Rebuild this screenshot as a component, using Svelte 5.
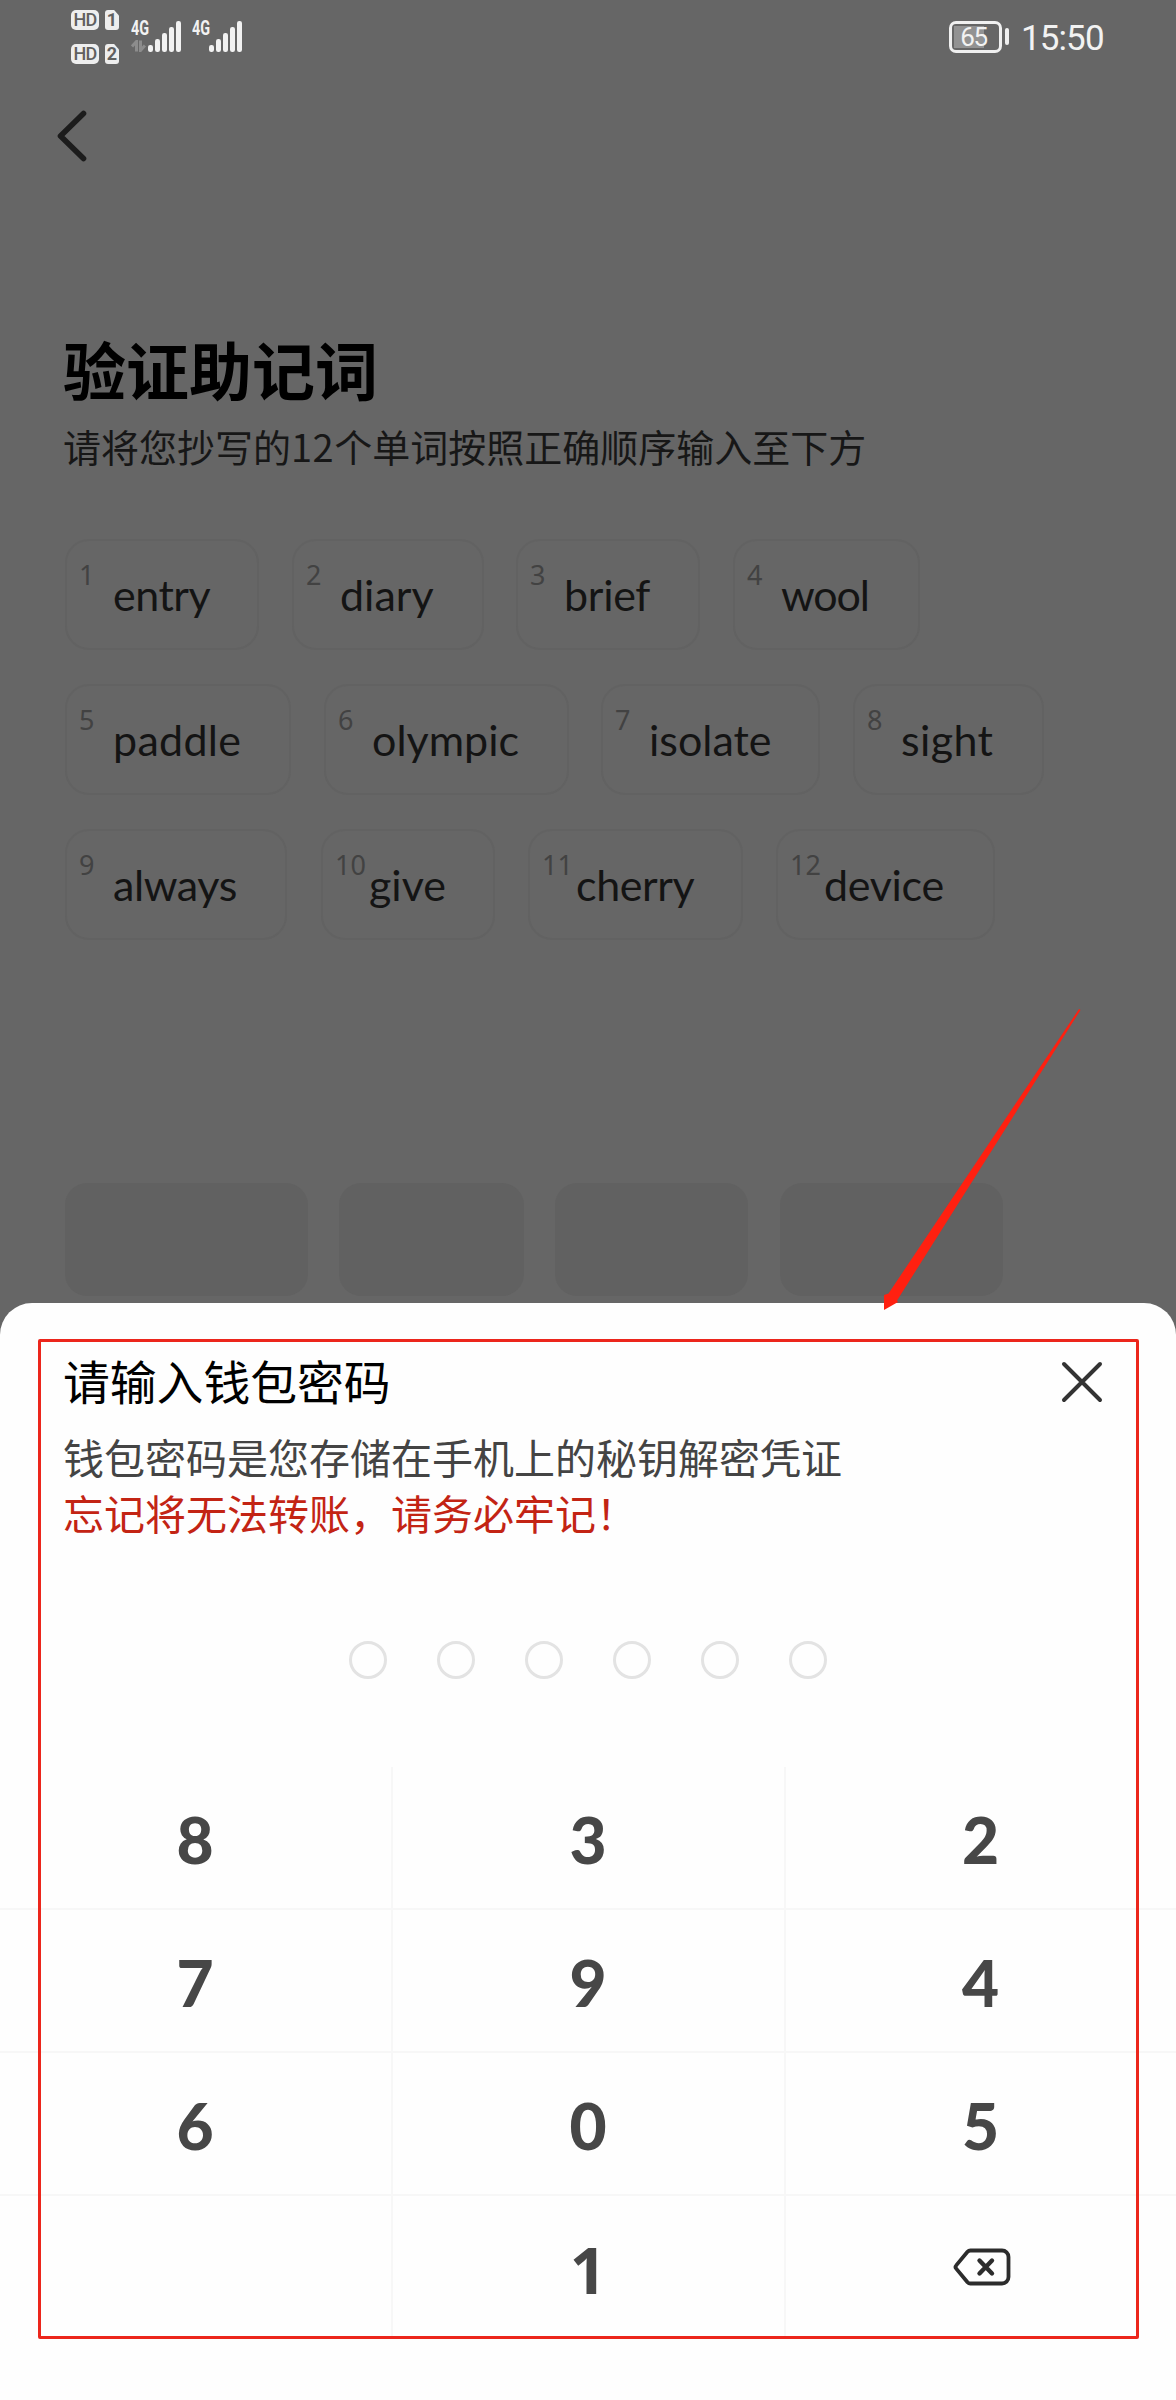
<script>
  const rows = [
    [
      { n: 1, word: 'entry', w: 194, gap: 0, ls: -0.5 },
      { n: 2, word: 'diary', w: 192, gap: 33, ls: 0 },
      { n: 3, word: 'brief', w: 184, gap: 32, ls: -0.3 },
      { n: 4, word: 'wool', w: 187, gap: 33, ls: -1.2 }
    ],
    [
      { n: 5, word: 'paddle', w: 226, gap: 0, ls: 0.3 },
      { n: 6, word: 'olympic', w: 245, gap: 33, ls: 0 },
      { n: 7, word: 'isolate', w: 219, gap: 32, ls: 0 },
      { n: 8, word: 'sight', w: 191, gap: 33, ls: 0.4 }
    ],
    [
      { n: 9, word: 'always', w: 222, gap: 0, ls: -0.4 },
      { n: 10, word: 'give', w: 174, gap: 34, ls: 0 },
      { n: 11, word: 'cherry', w: 215, gap: 33, ls: -0.4 },
      { n: 12, word: 'device', w: 219, gap: 33, ls: -0.3 }
    ]
  ];
  const slots = [
    { w: 243, gap: 0 },
    { w: 185, gap: 31 },
    { w: 193, gap: 31 },
    { w: 223, gap: 32 }
  ];
  const keys = ['8', '3', '2', '7', '9', '4', '6', '0', '5', '', '1', 'del'];
  const bars = [6.5, 12.5, 19, 25, 31];
</script>

<div class="screen">
  <header class="status">
    <div class="sims">
      {#each [1, 2] as n}
        <div class="sim"><span class="hd">HD</span><span class="card">{n}</span></div>
      {/each}
    </div>
    {#each [0, 1] as s}
      <div class="signal">
        <div class="net">
          <span>4G</span>
          {#if s === 0}
            <svg width="15" height="12" viewBox="0 0 15 12" fill="none" stroke="#8c8c8c" stroke-width="3">
              <path d="M5.500 11.500V1.500L1 6.500M9.500 .5v10l4.400-5" />
            </svg>
          {/if}
        </div>
        <div class="bars">
          {#each bars as h}<i style="height:{h}px"></i>{/each}
        </div>
      </div>
    {/each}
    <div class="battery">65</div>
    <i class="cap"></i>
    <div class="clock">15:50</div>
  </header>

  <nav class="nav">
    <svg width="32" height="54" viewBox="0 0 32 54" fill="none" stroke="#1c1c1c" stroke-width="5.6" stroke-linecap="round" stroke-linejoin="round">
      <path d="M27.500 4.500 4.500 27 27.500 49.500" />
    </svg>
  </nav>

  <main class="content">
    <h1>验证助记词</h1>
    <p class="sub">请将您抄写的<span>12</span>个单词按照正确顺序输入至下方</p>

    <div class="words">
      {#each rows as row}
        <div class="row">
          {#each row as c}
            <div class="chip" style="width:{c.w}px;margin-left:{c.gap}px">
              <span class="num">{c.n}</span>
              <span class="word" style="letter-spacing:{c.ls}px">{c.word}</span>
            </div>
          {/each}
        </div>
      {/each}
    </div>

    <div class="row slots">
      {#each slots as s}
        <div class="slot" style="width:{s.w}px;margin-left:{s.gap}px"></div>
      {/each}
    </div>
  </main>

  <section class="sheet">
    <div class="head">
      <h2>请输入钱包密码</h2>
      <svg width="42" height="42" viewBox="0 0 42 42" fill="none" stroke="#333" stroke-width="4" stroke-linecap="round">
        <path d="M3 3 39 39M39 3 3 39" />
      </svg>
    </div>
    <p class="note">钱包密码是您存储在手机上的秘钥解密凭证</p>
    <p class="note warn">忘记将无法转账，请务必牢记！</p>
    <div class="dots">
      {#each Array(6) as _}<i></i>{/each}
    </div>
    <div class="pad">
      {#each keys as k}
        <div class="key" class:one={k === '1'}>
          {#if k === 'del'}
            <svg width="58" height="38" viewBox="0 0 58 38" fill="none" stroke="#2c2c2c" stroke-width="3.8" stroke-linecap="round" stroke-linejoin="round">
              <path d="M17.500 2.500H49a6.500 6.500 0 0 1 6.500 6.500V29a6.500 6.500 0 0 1-6.500 6.500H17.500a4 4 0 0 1-3-1.300L3.200 20.600a2.400 2.400 0 0 1 0-3.200L14.500 3.800a4 4 0 0 1 3-1.300Z" />
              <path stroke-width="4.400" d="M26.500 12.500 39 25.500M39 12.500 26.500 25.500" />
            </svg>
          {:else}
            {k}
          {/if}
        </div>
      {/each}
    </div>
  </section>

  <div class="frame"></div>
  <svg class="arrow" width="200" height="304" viewBox="0 0 200 304">
    <path fill="#ff2010" d="M196 1 197.500 2 14 292.500 15 294 1 302V287L5.500 285.500Z" />
  </svg>
</div>

<style>
  :global(body) { background: #666; }
  .screen {
    position: relative;
    width: 1176px;
    height: 2400px;
    overflow: hidden;
    background: #666;
    display: flex;
    flex-direction: column;
    font-family: "Noto Sans", "Noto Sans CJK SC", sans-serif;
  }
  h1, h2, p { margin: 0; font-family: "Noto Sans CJK SC", sans-serif; }
  svg { display: block; flex: none; }

  .status {
    display: flex;
    align-items: flex-start;
    height: 74px;
    padding-left: 71px;
    box-sizing: border-box;
    color: #f2f2f2;
  }
  .sims { display: flex; flex-direction: column; gap: 14px; padding-top: 10px; width: 60px; }
  .sim { display: flex; gap: 6px; }
  .hd, .card {
    height: 20px;
    background: #eee;
    color: #606060;
    font: 500 18px/20px Roboto, sans-serif;
    text-align: center;
  }
  .hd { width: 28px; border-radius: 5px; letter-spacing: -.8px; }
  .card { width: 14px; border-radius: 3px; font-weight: 700; clip-path: polygon(0 0, 65% 0, 100% 28%, 100% 100%, 0 100%); }
  .signal { display: flex; padding-top: 20px; height: 32px; width: 61px; }
  .net { width: 17px; }
  .net span { display: block; font: 700 20px/17px Roboto, sans-serif; transform: scaleX(.72); transform-origin: left; height: 20px; }
  .bars { display: flex; align-items: flex-end; gap: 2.600px; height: 31.500px; }
  .bars i { width: 4.500px; border-radius: 2.200px; background: #f2f2f2; }
  .battery {
    box-sizing: border-box;
    width: 53px;
    height: 32px;
    margin: 21px 0 0 696px;
    border: 3px solid #f0f0f0;
    border-radius: 7px;
    background: linear-gradient(#929292, #929292) 2px 2px / 30px 22px no-repeat;
    font: 400 26px/26px Roboto, sans-serif;
    text-align: center;
    text-indent: -4px;
    letter-spacing: -1.400px;
  }
  .cap { width: 4px; height: 17px; margin: 28px 0 0 3px; border-radius: 2px; background: #f0f0f0; }
  .clock { margin: 18px 0 0 12px; font: 400 35px/41px Roboto, sans-serif; letter-spacing: -.9px; white-space: nowrap; }

  .nav { padding: 35px 0 0 56px; height: 224px; }

  .content { height: 970px; padding-left: 63px; }
  h1 { font-size: 63px; line-height: 70px; font-weight: 700; color: #000; }
  .sub { margin-top: 18px; font-size: 38px; line-height: 50px; color: #171717; white-space: nowrap; }
  .sub span { letter-spacing: .5px; }
  .words { display: flex; flex-direction: column; gap: 34px; margin: 68px 0 0 2px; }
  .row { display: flex; }
  .chip {
    position: relative;
    box-sizing: border-box;
    height: 111px;
    padding-left: 46px;
    border: 2px solid #626262;
    border-radius: 24px;
  }
  .num { position: absolute; left: 12px; top: 20px; font-size: 27px; line-height: 27px; color: #424242; }
  .word { display: block; font: 400 43px/107px Lato, sans-serif; color: #141414; white-space: nowrap; }
  .slots { margin: 243px 0 0 2px; }
  .slot { height: 113px; border-radius: 22px; background: #616161; }

  .sheet { height: 1097px; background: #fefefe; border-radius: 32px 32px 0 0; }
  .head { display: flex; justify-content: space-between; align-items: center; padding: 47px 73px 0 63px; height: 60px; }
  h2 { font-size: 46.800px; line-height: 60px; font-weight: 400; color: #000; }
  .head svg { margin-top: 3px; }
  .note { padding-left: 63px; font-size: 41px; line-height: 56px; color: #444; white-space: nowrap; }
  .head + .note { margin-top: 18px; }
  .warn { color: #c32414; }
  .dots { display: flex; justify-content: center; gap: 50px; margin-top: 101px; }
  .dots i { width: 32px; height: 32px; border: 3px solid #e3e3e3; border-radius: 50%; }
  .pad {
    display: grid;
    grid-template-columns: 393px 393px 390px;
    grid-auto-rows: 143px;
    margin-top: 88px;
  }
  .key {
    box-sizing: border-box;
    display: flex;
    align-items: center;
    justify-content: center;
    padding: 5px 1px 0 0;
    border-right: 2px solid #f7f7f7;
    border-bottom: 2px solid #f7f7f7;
    font: 900 64px/76px Lato, sans-serif;
    color: #474747;
  }
  .key.one { font: 700 64px/76px "Noto Sans", sans-serif; }
  .key:nth-child(3n) { border-right: 0; }
  .key:nth-child(n + 10) { border-bottom: 0; }
  .key svg { margin: 0 0 7px 2px; }

  .frame { position: absolute; left: 38px; top: 1339px; width: 1095px; height: 994px; border: 3px solid #ec261c; border-radius: 2px; }
  .arrow { position: absolute; left: 883px; top: 1008px; }
</style>
